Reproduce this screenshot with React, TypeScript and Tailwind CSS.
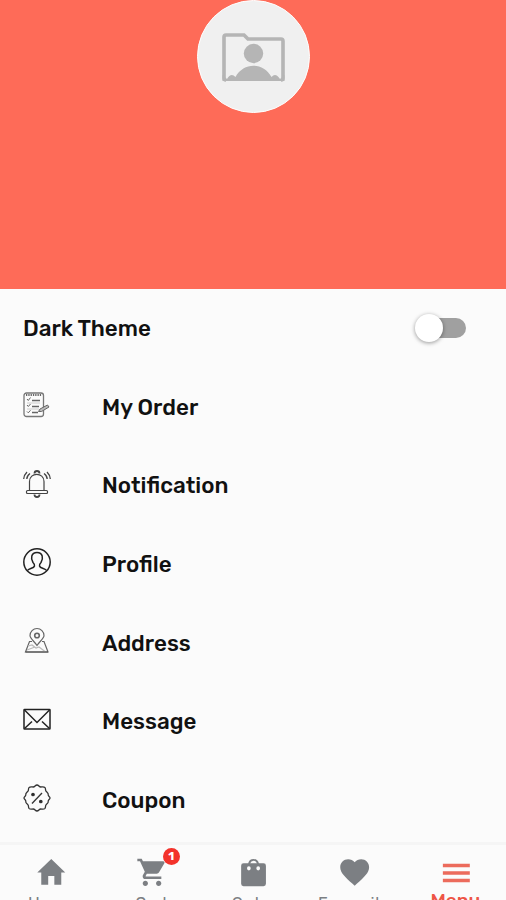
import React, { useState } from "react";

const OrderIcon = () => (
  <svg viewBox="0 0 28 28" className="w-7 h-7" fill="none" stroke="#777" strokeWidth="1">
    <rect x="1" y="2" width="19.500" height="23.500" rx="2.500" strokeWidth="1.300" />
    <path d="M3 4h16" stroke="#666" strokeWidth="2.200" strokeDasharray="1.300 1" />
    <path d="M4 8l1.300 1.500L7.500 6.500M4 14l1.300 1.500 2.200-2.500M4 20.500l1.300 1.300 2.200-2.500" stroke="#666" />
    <path d="M9 9.500h8M9 15.500h7M9 21.500h6" stroke="#666" strokeWidth="1.400" />
    <path d="M4 12h13M4 18h12" stroke="#ccc" />
    <path d="M15.500 20.500l1.500-2.500 7.500-4 1.500 2-7.500 4.500z" fill="#bbb" stroke="#666" />
  </svg>
);

const BellIcon = () => (
  <svg viewBox="0 0 28 28" className="w-7 h-7" fill="none" stroke="#444" strokeWidth="1.200">
    <path d="M11.500 3.500a2.500 2.500 0 0 1 5 0" strokeWidth="1.800" />
    <path d="M6.500 20.500V11.500C6.500 2 21 2 21 11.500v9" />
    <rect x="3.500" y="20.500" width="21" height="3" rx="1" />
    <path d="M11.500 24.500a2.500 2.500 0 0 0 5 0" strokeWidth="1.800" />
    <path d="M4 2C2 4 .7 6 .7 9M7 3.500C5 5 3.800 6.500 3.800 9M24 2c2 2 3.300 4 3.300 7M21 3.500c2 1.500 3.200 3 3.200 5.500" strokeWidth="1.300" />
  </svg>
);

const ProfileIcon = () => (
  <svg viewBox="0 0 28 28" className="w-7 h-7" fill="none" stroke="#222" strokeWidth="1.500">
    <circle cx="14" cy="14" r="13.200" />
    <path d="M4.500 22.500c1-2 6.500-2 7-4.500.3-1.500-.5-2.500-1.500-3.500C7.500 10.500 8 4.500 14 4.500s6.500 6 4 10c-1 1-1.800 2-1.500 3.500.5 2.500 6 2.500 7 4.500" />
  </svg>
);

const AddressIcon = () => (
  <svg viewBox="0 0 28 28" className="w-7 h-7" fill="none" stroke="#666" strokeWidth="1.200">
    <path d="M14 18.500C11 14 7 11.500 7 8.500a7 7 0 0 1 14 0c0 3-4 5.500-7 10z" />
    <circle cx="14" cy="8.500" r="2.300" strokeWidth="1.600" />
    <path d="M9 14.500H6.500L2.500 25h22.500l-4-10.500h-2" />
    <path d="M5 19l4-1 4 3 3-1 6 4.500M4 23l8-3" stroke="#bbb" />
    <path d="M2.500 25h22.500" stroke="#555" />
  </svg>
);

const MessageIcon = () => (
  <svg viewBox="0 0 28 28" className="w-7 h-7" fill="none" stroke="#222" strokeWidth="1.500">
    <rect x="1" y="3.500" width="26" height="19.500" rx=".5" />
    <path d="M1.500 4L14 16.500 26.500 4M1.500 22.500l7.500-7M26.500 22.500l-7.500-7" />
  </svg>
);

const CouponIcon = () => (
  <svg viewBox="0 0 28 28" className="w-7 h-7" fill="none" stroke="#333" strokeWidth="1.300" strokeLinejoin="round">
    <path d="M14 1C15.800 1 16 3 17.800 3C19.500 3 21 2.500 22 3.700C23 5 22 6.300 23.300 7.500C24.500 8.700 25.500 9 25.200 10.700C25 12.300 27 12.500 27 14C27 15.500 25 15.700 25.200 17.300C25.500 19 24.500 19.300 23.300 20.500C22 21.700 23 23 22 24.300C21 25.500 19.500 25 17.800 25C16 25 15.800 27 14 27C12.200 27 12 25 10.200 25C8.500 25 7 25.500 6 24.300C5 23 6 21.700 4.700 20.500C3.500 19.300 2.500 19 2.800 17.300C3 15.700 1 15.500 1 14C1 12.500 3 12.300 2.800 10.700C2.500 9 3.500 8.700 4.700 7.500C6 6.300 5 5 6 3.700C7 2.500 8.500 3 10.200 3C12 3 12.200 1 14 1z" />
    <path d="M9 19.500L19 9" />
    <circle cx="10" cy="10.500" r="1.200" fill="#222" />
    <circle cx="17.800" cy="17.500" r="1.200" fill="#222" />
  </svg>
);

const menuItems = [
  { label: "My Order", icon: <OrderIcon /> },
  { label: "Notification", icon: <BellIcon /> },
  { label: "Profile", icon: <ProfileIcon /> },
  { label: "Address", icon: <AddressIcon /> },
  { label: "Message", icon: <MessageIcon /> },
  { label: "Coupon", icon: <CouponIcon /> },
];

const navItems = [
  { label: "Home", path: "M9.900 21.500V15h4.600v6.500h5.200V12.400h3L12.200 2.300 1.700 12.400h3v9.100z" },
  {
    label: "Cart",
    badge: 1,
    path: "M7 18.500c-1.100 0-1.990.9-1.990 2s.89 2 1.990 2 2-.9 2-2-.9-2-2-2zM1 2v2h2l3.600 7.890-1.350 2.450c-.16.280-.25.610-.25.960 0 1.100.9 2 2 2h12v-2H7.420c-.14 0-.25-.11-.25-.25l.03-.12.9-1.630h7.450c.75 0 1.410-.41 1.750-1.030l3.980-6.790A1 1 0 0 0 20.400 4H5.210l-.94-2H1zm16 16.500c-1.100 0-1.990.9-1.990 2s.89 2 1.990 2 2-.9 2-2-.9-2-2-2z",
  },
  {
    label: "Order",
    path: "M19.900 5.500H16.400a4.100 4.100 0 0 0-8 0H4.900a1.800 1.800 0 0 0-1.800 1.800v13.600a1.800 1.800 0 0 0 1.800 1.800h15a1.800 1.800 0 0 0 1.800-1.800V7.300a1.800 1.800 0 0 0-1.800-1.800zM9.900 5.500a2.600 2.600 0 0 1 5 0zM8.900 10.800a1.400 1.600 0 1 1 0-3.200 1.400 1.600 0 0 1 0 3.200zm7 0a1.400 1.600 0 1 1 0-3.200 1.400 1.600 0 0 1 0 3.200z",
  },
  {
    label: "Favourite",
    path: "M12.500 22.300l-1.570-1.420C5.350 15.830 1.670 12.500 1.670 8.400 1.670 5.070 4.290 2.500 7.620 2.500c1.890 0 3.700.88 4.880 2.260C13.680 3.380 15.490 2.500 17.380 2.500c3.330 0 5.950 2.570 5.950 5.900 0 4.100-3.680 7.430-9.260 12.500z",
  },
  { label: "Menu", path: "M2.900 19.700h20.200v-2.600H2.900zm0-5.600h20.200v-2.600H2.900zm0-8.200v2.600h20.200V5.900z" },
];

const App = () => {
  const [dark, setDark] = useState(false);
  const [active, setActive] = useState("Menu");

  return (
    <div className="w-full h-[900px] overflow-hidden flex flex-col bg-[#fbfbfb] font-['Rubik','Roboto',sans-serif] text-[#111]">
      <div className="h-[289px] shrink-0 bg-[#fe6b58] flex justify-center items-start">
        <div className="w-[113px] h-[113px] rounded-full bg-[#f0f0f0] border border-white flex items-center justify-center">
          <svg viewBox="0 0 64 50" className="w-16 h-[50px]">
            <path d="M5 48C3 48 3 47 3 46V5q0-2 2-2h18l4 4h33q2 0 2 2v37q0 2-2 2" fill="none" stroke="#b5b5b5" strokeWidth="3.600" />
            <circle cx="32.500" cy="21.500" r="9.700" fill="#b5b5b5" />
            <path d="M1.500 49v-6l4.500 4q4-7 8.500-2c8-15 28-15 36 0q4-5 8.500 2l4.500-4v6z" fill="#b5b5b5" />
          </svg>
        </div>
      </div>

      <div className="flex-1 min-h-0 overflow-hidden text-[22.4px] font-medium">
        <div className="h-[78.7px] pl-[23px] pr-10 flex items-center justify-between">
          <span>Dark Theme</span>
          <button onClick={() => setDark(!dark)} className="w-[51px] h-7 flex items-center">
            <span className={`shrink-0 w-7 h-7 rounded-full bg-white shadow-[0_1px_4px_rgba(0,0,0,0.4)] z-10 ${dark ? "translate-x-6" : ""}`} />
            <span className="w-[42px] h-5 -ml-[19px] rounded-full bg-[#a0a0a0]" />
          </button>
        </div>
        {menuItems.map((item) => (
          <div key={item.label} className="h-[78.7px] pl-[23px] flex items-center">
            <span className="w-[79px] pb-1">{item.icon}</span>
            <span className="pt-px">{item.label}</span>
          </div>
        ))}
      </div>

      <div className="h-[58px] shrink-0 border-t-3 border-[#f5f5f5] flex overflow-hidden">
        {navItems.map((item) => (
          <button
            key={item.label}
            onClick={() => setActive(item.label)}
            className={`w-1/5 pt-[11px] flex flex-col items-center ${active === item.label ? "text-[#ec6b5c]" : "text-[#7c7f83]"}`}
          >
            <span className="relative h-8">
              <svg viewBox="0 0 24 24" fill="currentColor" fillRule="evenodd" className="w-8 h-8">
                <path d={item.path} />
              </svg>
              {item.badge && (
                <span className="absolute -top-2 left-[27px] w-[17px] h-[17px] rounded-full bg-[#f3322b] text-white text-[12px] font-bold leading-[17px]">
                  {item.badge}
                </span>
              )}
            </span>
            <span className={active === item.label ? "mt-[3px] text-[18.9px] leading-5 font-medium text-[#ee5546]" : "mt-[6px] text-[16.5px] leading-5"}>
              {item.label}
            </span>
          </button>
        ))}
      </div>
    </div>
  );
};

export default App;
